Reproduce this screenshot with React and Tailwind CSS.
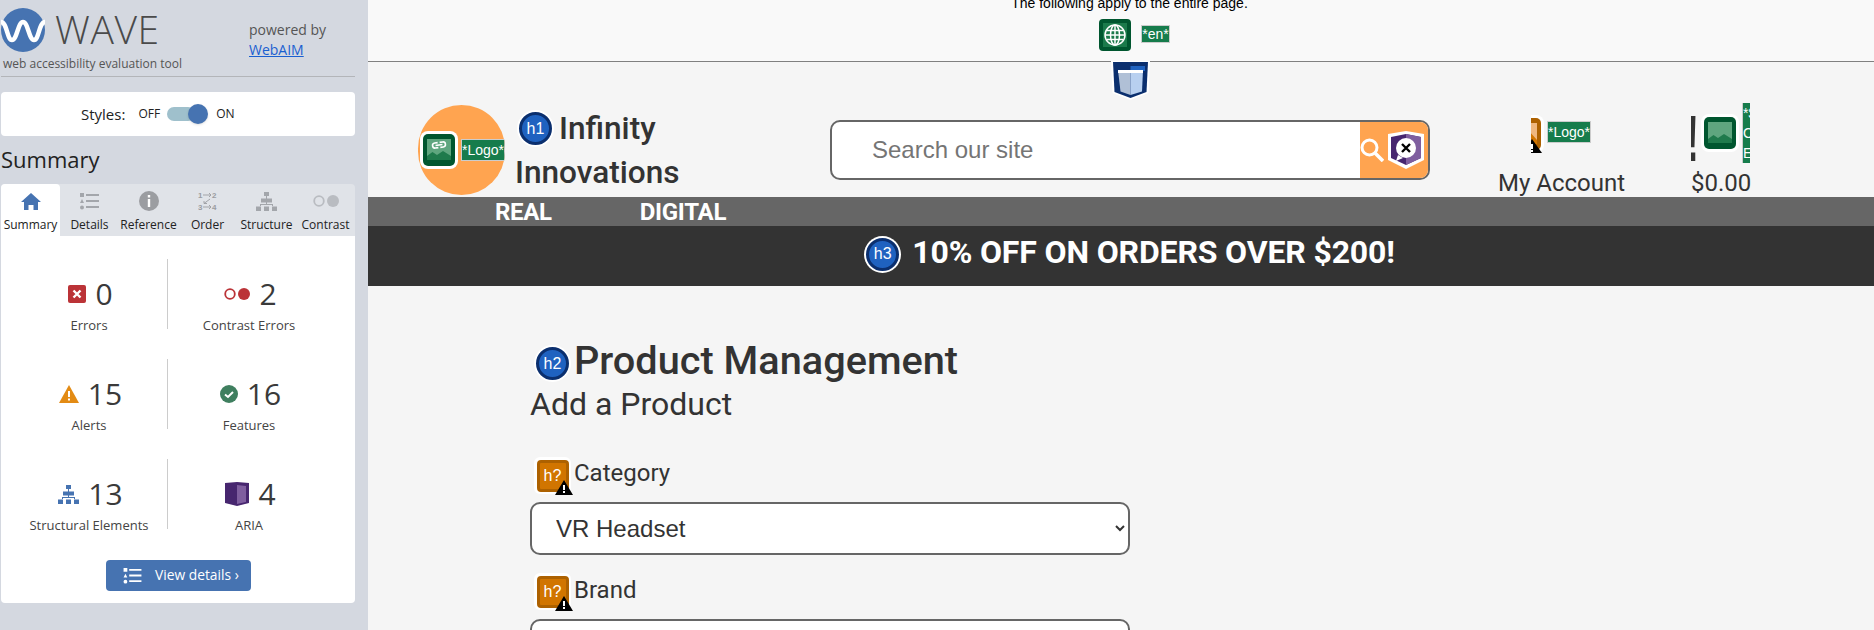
import React from "react";

const HeadingIcon = ({ label, className = "" }) => (
  <span className={`inline-flex h-[37px] w-[37px] shrink-0 items-center justify-center rounded-full bg-white ${className}`}>
    <span className="flex h-[33px] w-[33px] items-center justify-center rounded-full border-[3px] border-[#0b2f6e] bg-[#1f62c0] font-['Liberation_Sans',sans-serif] text-[16px] font-normal leading-none text-white">
      {label}
    </span>
  </span>
);

const UnknownHeadingIcon = () => (
  <span className="relative inline-flex h-[37px] w-[37px] shrink-0 items-center justify-center rounded-[6px] bg-white">
    <span className="flex h-8 w-8 items-center justify-center rounded-[4px] border-[3px] border-[#ad6100] bg-[#d17500] font-['Liberation_Sans',sans-serif] text-[16px] font-normal leading-none text-[#fff]">
      h?
    </span>
    <svg viewBox="0 0 18 15" className="absolute -bottom-px -right-[2px] h-[15px] w-[18px]">
      <path d="M9 0 18 15H0Z" fill="#000" />
      <path d="M8 5h2v5H8zM8 11h2v2H8z" fill="#fff" />
    </svg>
  </span>
);

const ImageIcon = ({ link }) => (
  <svg viewBox="0 0 38 38" className="h-[38px] w-[38px] shrink-0">
    <rect width="38" height="38" rx="8" fill="#fff" />
    <rect x="3" y="3" width="32" height="32" rx="5" fill="#00562f" />
    <rect x="7" y="8" width="24" height="21" fill="#5fa67f" />
    <path d="M7 29v-4l5.500-4 4.500 3 6-4 8 5v4Z" fill="#1f7a4c" />
    {link && (
      <g fill="none" stroke="#fff" strokeWidth="1.600" transform="rotate(-8 19 14)">
        <path d="M18 11.500h-3a2.500 2.500 0 0 0 0 5h3" />
        <path d="M20 16.500h3a2.500 2.500 0 0 0 0-5h-3" />
        <path d="M15.500 14h7" />
      </g>
    )}
  </svg>
);

const SuspiciousImageIcon = () => (
  <svg viewBox="0 0 38 38" className="h-[38px] w-[38px] shrink-0">
    <rect width="38" height="38" rx="8" fill="#fff" />
    <rect x="3" y="3" width="32" height="32" rx="5" fill="#ad6100" />
    <rect x="7" y="8" width="24" height="21" fill="#efb77e" />
    <path d="M7 29v-4l5.500-4 4.500 3 6-8 8 9v4Z" fill="#d17500" />
    <path d="M26 24 36 38H16Z" fill="#000" />
    <path d="M25 29h2v5h-2zM25 35h2v2h-2z" fill="#fff" />
  </svg>
);

const AltLabel = ({ children }) => (
  <span className="inline-flex h-[22px] items-center whitespace-nowrap border border-[#cccccc] bg-[#167c4c] font-['Liberation_Sans',sans-serif] text-[14px] leading-none text-white">
    {children}
  </span>
);

const StructureGlyph = ({ className, fill }) => (
  <svg viewBox="0 0 21 19" className={className} fill={fill}>
    <path d="M8 0h5v4H8zM5 6.500h11v4H5z" />
    <path d="M10 3h1v4h-1zM4 12h13v2h-1v-1H5v1H4zM10 9h1v4h-1z" />
    <path d="M0 14.500h5V19H0zM8 14.500h5V19H8zM16 14.500h5V19h-5z" />
  </svg>
);

const ListGlyph = ({ className, fill }) => (
  <svg viewBox="0 0 19 17" className={className} fill={fill}>
    <path d="M0 0h4v4H0zM6 1h13v2H6zM2 6l2 4H0zM6 7h13v2H6zM6 13h13v2H6z" />
    <circle cx="2" cy="14.500" r="2" />
  </svg>
);

const stats = [
  {
    count: 0,
    label: "Errors",
    icon: (
      <svg viewBox="0 0 18 18" className="h-[18px] w-[18px]">
        <rect width="18" height="18" rx="2" fill="#bb3337" />
        <path d="m5.500 5.500 7 7m0-7-7 7" stroke="#fff" strokeWidth="2.400" />
      </svg>
    ),
  },
  {
    count: 2,
    label: "Contrast Errors",
    icon: (
      <svg viewBox="0 0 26 12" className="h-3 w-[26px]">
        <circle cx="6" cy="6" r="4.800" fill="none" stroke="#bb3337" strokeWidth="1.800" />
        <circle cx="20" cy="6" r="6" fill="#bb3337" />
      </svg>
    ),
  },
  {
    count: 15,
    label: "Alerts",
    icon: (
      <svg viewBox="0 0 20 18" className="h-[18px] w-5">
        <path d="M10 0 20 18H0Z" fill="#e38b14" />
        <path d="M9 6h2v6H9zM9 13.500h2v2H9z" fill="#fff" />
      </svg>
    ),
  },
  {
    count: 16,
    label: "Features",
    icon: (
      <svg viewBox="0 0 18 18" className="h-[18px] w-[18px]">
        <circle cx="9" cy="9" r="9" fill="#3f7f5f" />
        <path d="m5 9.500 3 2.500 5-5" fill="none" stroke="#fff" strokeWidth="2" />
      </svg>
    ),
  },
  {
    count: 13,
    label: "Structural Elements",
    icon: <StructureGlyph className="h-[19px] w-[21px]" fill="#4673b1" />,
  },
  {
    count: 4,
    label: "ARIA",
    icon: (
      <svg viewBox="0 0 24 24" className="h-6 w-6">
        <path d="M0 1 12 0l12 1v20l-12 3-12-3Z" fill="#47266f" />
        <path d="M12 3l9 1v16l-9 2Z" fill="#7f5e9f" />
      </svg>
    ),
  },
];

const tabs = [
  {
    name: "Summary",
    active: true,
    icon: (
      <svg viewBox="0 0 20 17" className="h-[17px] w-5">
        <path d="M10 0 20 9h-3v8h-4.500v-5h-5v5H3V9H0Z" fill="#4673b1" />
      </svg>
    ),
  },
  { name: "Details", icon: <ListGlyph className="h-[17px] w-[19px]" fill="#a3a6ab" /> },
  {
    name: "Reference",
    icon: (
      <svg viewBox="0 0 20 20" className="h-5 w-5">
        <circle cx="10" cy="10" r="10" fill="#9b9da1" />
        <path d="M8.800 4h2.400v2.400H8.800zM8.800 8h2.400v8H8.800z" fill="#fff" />
      </svg>
    ),
  },
  {
    name: "Order",
    icon: (
      <svg viewBox="0 0 19 20" className="h-5 w-[19px]" fill="#9b9da1" fontFamily="Liberation Sans, sans-serif" fontSize="8" fontWeight="700">
        <text x="0" y="7">1</text>
        <text x="14" y="7">2</text>
        <text x="0" y="19">3</text>
        <text x="14" y="19">4</text>
        <g fill="none" stroke="#9b9da1" strokeWidth="0.900">
          <path d="M5 4h8M11 2l2 2-2 2M5 16h8M11 14l2 2-2 2M12 8l-6 4.500M6 10v2.500h3" />
        </g>
      </svg>
    ),
  },
  { name: "Structure", icon: <StructureGlyph className="h-[19px] w-[21px]" fill="#a3a6ab" /> },
  {
    name: "Contrast",
    icon: (
      <svg viewBox="0 0 26 12" className="h-3 w-[26px]">
        <circle cx="6" cy="6" r="4.800" fill="none" stroke="#b9bcc1" strokeWidth="1.800" />
        <circle cx="20" cy="6" r="6" fill="#b9bcc1" />
      </svg>
    ),
  },
];

const Sidebar = () => (
  <aside className="h-full w-[368px] shrink-0 bg-[#d4d8e0] font-['Open_Sans',sans-serif] text-[#333]">
    <div className="ml-px w-[354px]">
      <div className="flex h-[77px] border-b border-[#b3b5b9]">
        <div className="w-[248px]">
          <div className="flex h-[56px] items-start pt-2">
            <svg viewBox="0 0 44 44" className="h-11 w-11 shrink-0">
              <circle cx="22" cy="22" r="22" fill="#4673b1" />
              <path d="M0 14c6 0 6 18 11 18s6-18 11-18 6 18 11 18 5-18 11-18" fill="none" stroke="#fff" strokeWidth="4.500" />
            </svg>
            <span className="ml-[10px] text-[39px] font-light leading-[42px] tracking-[0.6px] text-[#4a4a4a]">WAVE</span>
          </div>
          <div className="ml-[2px] whitespace-nowrap text-[12px] leading-[16px] text-[#555]">web accessibility evaluation tool</div>
        </div>
        <div className="pt-[20px] text-[14px] leading-[20px] text-[#555]">
          <div>powered by</div>
          <a className="text-[#1a5fd0] underline">WebAIM</a>
        </div>
      </div>
      <div className="mt-[15px] flex h-11 items-center rounded bg-white pl-[80px]">
        <span className="text-[15px] text-[#222]">Styles:</span>
        <span className="ml-[13px] text-[12px] text-[#222]">OFF</span>
        <span className="relative ml-[7px] h-[14px] w-[28px] rounded-full bg-[#9fc0cc]">
          <span className="absolute -right-[13px] -top-[3px] h-5 w-5 rounded-full bg-[#4673b1] shadow" />
        </span>
        <span className="ml-[21px] text-[12px] text-[#222]">ON</span>
      </div>
      <h2 className="flex h-12 items-center pb-[2px] text-[22px] font-normal text-[#222]">Summary</h2>
      <div className="flex h-[52px] rounded-t bg-[#e0e3e8]">
        {tabs.map((tab) => (
          <div key={tab.name} className={`flex w-[59px] flex-col items-center rounded-t pt-[7px] ${tab.active ? "bg-white" : ""}`}>
            <div className="flex h-5 items-center">{tab.icon}</div>
            <div className="mt-[6px] whitespace-nowrap text-[12px] leading-[16px] text-[#222]">{tab.name}</div>
          </div>
        ))}
      </div>
      <div className="h-[367px] rounded-b bg-white pt-[23px]">
        <div className="ml-[10px] grid w-[319px] grid-cols-[157px_162px] gap-y-[30px]">
          {stats.map((stat, i) => (
            <div key={stat.label} className={`flex h-[70px] flex-col items-center pt-[15px] ${i % 2 === 0 ? "border-r border-[#cccccc]" : ""}`}>
              <div className="ml-[3px] flex h-[40px] shrink-0 items-center gap-[9px]">
                {stat.icon}
                <span className="text-[30px] leading-none text-[#3a3a3a]">{stat.count}</span>
              </div>
              <div className="mt-[2px] shrink-0 whitespace-nowrap text-[13px] leading-[18px] text-[#444]">{stat.label}</div>
            </div>
          ))}
        </div>
        <button className="ml-[105px] mt-[31px] flex h-[31px] w-[145px] items-center rounded bg-[#4673b1] pl-[17px] text-[13.8px] text-white">
          <ListGlyph className="h-4 w-[19px]" fill="#fff" />
          <span className="ml-[13px]">View details ›</span>
        </button>
      </div>
    </div>
  </aside>
);

const App = () => (
  <div className="flex h-[630px] w-[1874px] overflow-hidden bg-[#f5f5f5]">
    <Sidebar />
    <main className="min-w-0 flex-1 font-['Roboto',sans-serif] text-[#333]">
      <div className="flex h-[62px] flex-col items-center overflow-hidden border-b border-[#808080] bg-[#f9f9f9] pl-[17px]">
        <p className="-mt-[5px] h-[24px] shrink-0 whitespace-nowrap font-['Liberation_Sans',sans-serif] text-[14px] leading-[16px] text-black">
          The following apply to the entire page.
        </p>
        <div className="ml-[10px] flex items-center gap-[10px]">
          <svg viewBox="0 0 32 32" className="h-8 w-8">
            <rect width="32" height="32" rx="4" fill="#00562f" />
            <rect x="4" y="4" width="24" height="24" fill="#1b7a4b" />
            <g fill="none" stroke="#fff" strokeWidth="1.500">
              <circle cx="16" cy="16" r="10" />
              <ellipse cx="16" cy="16" rx="4.500" ry="10" />
              <path d="M6 16h20M7.500 11.500h17M7.500 20.500h17M16 6v20" />
            </g>
          </svg>
          <span className="-mt-[2px] flex h-[18px] items-center border border-[#cccccc] bg-[#167c4c] font-['Liberation_Sans',sans-serif] text-[14px] leading-none text-white">*en*</span>
        </div>
      </div>

      <header className="relative flex h-[135px] items-start pl-[50px]">
        <svg viewBox="0 0 39 39" className="absolute left-[743px] -top-px h-[39px] w-[39px]">
          <path d="M0 0h39l-1.500 32-18 7-18-7Z" fill="#fff" />
          <path d="M2 1h35l-1.500 30-16 6-16-6Z" fill="#0b2f6e" />
          <path d="M7 9h12.500v25l-10-3.500Z" fill="#b0c0d6" />
          <path d="M19.500 9H32l-1 21.500-11.500 3.500Z" fill="#b8d0f0" />
          <path d="M19.500 5H34v5H19.500Z" fill="#1f62c0" />
          <path d="M7 9h25v3H7Z" fill="#fff" />
        </svg>

        <div className="mt-[43px] flex h-[90px] w-[87px] shrink-0 items-center overflow-hidden rounded-full bg-[#ffa450] pl-[2px]">
          <ImageIcon link />
          <span className="ml-[3px]"><AltLabel>*Logo*</AltLabel></span>
        </div>

        <h1 className="ml-[10px] mt-[44px] w-[315px] shrink-0 text-[31.6px] font-medium leading-[45px]">
          <span className="ml-[2px] flex h-[45px] items-center gap-[5px]">
            <HeadingIcon label="h1" />
            Infinity
          </span>
          <span className="block -mt-[1px]">Innovations</span>
        </h1>

        <div className="mt-[58px] flex h-[60px] w-[600px] shrink-0 overflow-hidden rounded-[10px] border-2 border-[#666] bg-white">
          <span className="flex flex-1 items-center pl-[40px] font-['Liberation_Sans',sans-serif] text-[24px] text-[#757575]">Search our site</span>
          <span className="flex w-[68px] items-center bg-[#ffa450]">
            <svg viewBox="0 0 24 24" className="h-6 w-6 shrink-0">
              <circle cx="9.500" cy="9.500" r="7.500" fill="none" stroke="#fff" strokeWidth="3" />
              <path d="m15 15 8 8" stroke="#fff" strokeWidth="3.500" />
            </svg>
            <svg viewBox="0 0 38 38" className="ml-[3px] h-[38px] w-[38px] shrink-0">
              <path d="M1 3 19 0l18 3v26l-18 9-18-9Z" fill="#fff" />
              <path d="M4 6 19 3l15 3v21l-15 7-15-7Z" fill="#47266f" />
              <path d="M19 3l15 3v21l-15 7Z" fill="#7f5e9f" />
              <circle cx="19" cy="17" r="10" fill="#fff" />
              <path d="M11 24 9 30l7-3Z" fill="#fff" />
              <path d="m15 13 8 8m0-8-8 8" stroke="#000" strokeWidth="2.400" />
            </svg>
          </span>
        </div>

        <div className="ml-[68px] mt-[53px] w-[126px] shrink-0 text-[24px] leading-[28px]">
          <div className="ml-[33px] flex h-[36px] items-start">
            <span className="h-[38px] w-[13px] shrink-0 overflow-hidden">
              <span className="-ml-[25px] block w-[38px]"><SuspiciousImageIcon /></span>
            </span>
            <span className="ml-[3px] mt-[6px] flex"><AltLabel>*Logo*</AltLabel></span>
          </div>
          <div className="mt-[18px] whitespace-nowrap">My Account</div>
        </div>

        <div className="ml-[68px] mt-[41px] w-[60px] shrink-0 text-[24px] leading-[28px]">
          <div className="flex h-[60px] items-center">
            <span className="-ml-px h-[60px] w-[7px] shrink-0 overflow-hidden pt-[6px] font-['Liberation_Sans',sans-serif] text-[65px] font-bold leading-[60px]">
              <span className="-ml-[11px] block">!</span>
            </span>
            <span className="ml-[3px] flex"><ImageIcon /></span>
            <span className="ml-[3px] h-[60px] w-2 shrink-0 overflow-hidden whitespace-nowrap border-l border-[#cccccc] bg-[#167c4c] font-['Liberation_Sans',sans-serif] text-[14px] leading-[20px] text-white">
              *$<br />O<br />E
            </span>
          </div>
          <div className="-ml-px mt-[6px] whitespace-nowrap">$0.00</div>
        </div>
      </header>

      <nav className="flex h-[29px] items-center gap-[88px] bg-[#666] pl-[127px] text-[24px] font-bold leading-none tracking-[-0.3px] text-white">
        <span>REAL</span>
        <span>DIGITAL</span>
      </nav>

      <div className="flex h-[60px] items-center justify-center bg-[#333] pb-[4px] pl-[17px]">
        <HeadingIcon label="h3" />
        <h3 className="ml-[11px] -mt-[5px] text-[32px] font-bold leading-none tracking-[-0.15px] text-white">10% OFF ON ORDERS OVER $200!</h3>
      </div>

      <section className="pl-[162px] pt-[59px]">
        <h2 className="flex h-[37px] items-center text-[39.7px] font-medium leading-none">
          <span className="ml-[4px] mr-[3px] flex"><HeadingIcon label="h2" /></span>
          <span className="-mt-[5px]">Product Management</span>
        </h2>
        <p className="mt-[2px] text-[32px] leading-[40px]">Add a Product</p>
        <form className="mt-[33px] w-[600px]">
          <label className="flex h-[37px] items-center text-[24px] leading-none">
            <span className="ml-[4px] mr-[3px] flex"><UnknownHeadingIcon /></span>
            <span className="-mt-[5px]">Category</span>
          </label>
          <select className="mt-[8px] block h-[53px] w-full rounded-[10px] border-2 border-[#666] bg-white pl-[20px] font-['Liberation_Sans',sans-serif] text-[24px] text-[#333]">
            <option>VR Headset</option>
          </select>
          <label className="mt-[18px] flex h-[37px] items-center text-[24px] leading-none">
            <span className="ml-[4px] mr-[3px] flex"><UnknownHeadingIcon /></span>
            <span className="-mt-[4px]">Brand</span>
          </label>
          <select className="mt-[9px] block h-[53px] w-full rounded-[10px] border-2 border-[#666] bg-white pl-[20px] font-['Liberation_Sans',sans-serif] text-[24px] text-[#333]" />
        </form>
      </section>
    </main>
  </div>
);

export default App;
